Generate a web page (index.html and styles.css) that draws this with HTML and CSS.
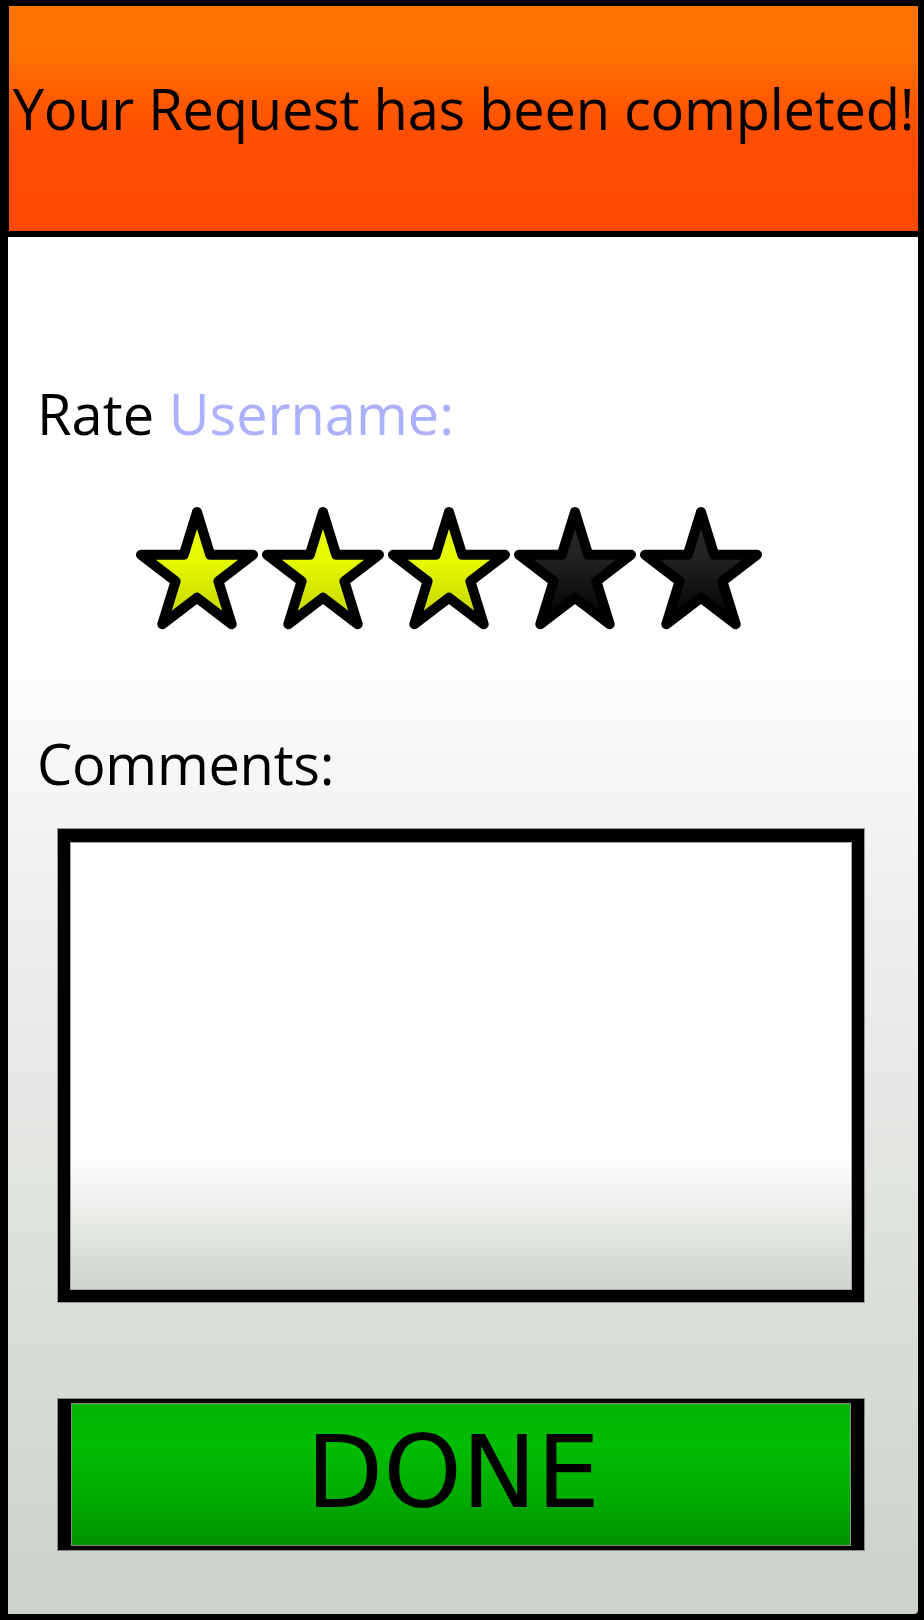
FILE: index.html
```html
<!DOCTYPE html>
<html lang="en">
<head>
<meta charset="utf-8">
<title>Request completed</title>
<link rel="stylesheet" href="styles.css">
</head>
<body>
<div class="frame">
  <header class="banner">
    <h1 class="banner-title">Your Request has been completed!</h1>
  </header>
  <main class="panel">
    <h2 class="label rate-label">Rate <span class="username">Username:</span></h2>
    <div class="stars">
      <svg class="star" viewBox="0 0 122 124" width="122" height="124"><defs><linearGradient id="gy" x1="0" y1="0" x2="0" y2="1"><stop offset="0" stop-color="#ecff00"/><stop offset="0.45" stop-color="#e4fa00"/><stop offset="1" stop-color="#c2d000"/></linearGradient></defs><polygon class="star-on" points="61,6 74.2,48.8 117,48.8 82.4,75.3 95.7,118.2 61,91.7 26.3,118.2 39.6,75.3 5,48.8 47.8,48.8"/></svg>
      <svg class="star" viewBox="0 0 122 124" width="122" height="124"><polygon class="star-on" points="61,6 74.2,48.8 117,48.8 82.4,75.3 95.7,118.2 61,91.7 26.3,118.2 39.6,75.3 5,48.8 47.8,48.8"/></svg>
      <svg class="star" viewBox="0 0 122 124" width="122" height="124"><polygon class="star-on" points="61,6 74.2,48.8 117,48.8 82.4,75.3 95.7,118.2 61,91.7 26.3,118.2 39.6,75.3 5,48.8 47.8,48.8"/></svg>
      <svg class="star" viewBox="0 0 122 124" width="122" height="124"><defs><linearGradient id="gd" x1="0" y1="0" x2="0" y2="1"><stop offset="0" stop-color="#2c2c2c"/><stop offset="0.4" stop-color="#222"/><stop offset="1" stop-color="#000"/></linearGradient></defs><polygon class="star-off" points="61,6 74.2,48.8 117,48.8 82.4,75.3 95.7,118.2 61,91.7 26.3,118.2 39.6,75.3 5,48.8 47.8,48.8"/></svg>
      <svg class="star" viewBox="0 0 122 124" width="122" height="124"><polygon class="star-off" points="61,6 74.2,48.8 117,48.8 82.4,75.3 95.7,118.2 61,91.7 26.3,118.2 39.6,75.3 5,48.8 47.8,48.8"/></svg>
    </div>
    <h2 class="label comments-label">Comments:</h2>
    <div class="comment-box"></div>
    <button class="done" type="button">DONE</button>
  </main>
</div>
</body>
</html>
```
FILE: styles.css
```css
html, body {
  margin: 0;
  padding: 0;
  background: #000;
}

.frame {
  box-sizing: border-box;
  width: 924px;
  height: 1620px;
  border-style: solid;
  border-color: #000;
  border-width: 6px 6px 6px 8px;
  display: flex;
  flex-direction: column;
  background: #000;
}

.banner {
  box-sizing: border-box;
  height: 231px;
  flex: none;
  margin-left: 1px;
  border-bottom: 6px solid #000;
  padding-top: 74px;
  background: linear-gradient(#ff7400 0%, #ff7200 22%, #ff5a00 42%, #ff4c00 60%, #ff4a00 100%);
}

.banner-title {
  margin: 0;
  font-family: "Open Sans", "Liberation Sans", sans-serif;
  font-weight: 400;
  font-size: 56px;
  line-height: 56px;
  letter-spacing: -0.25px;
  color: #000;
  text-align: center;
  white-space: nowrap;
}

.panel {
  flex: 1;
  display: flex;
  flex-direction: column;
  align-items: flex-start;
  border-bottom-right-radius: 4px;
  background: linear-gradient(#fff 0px, #fff 400px, #f4f5f4 560px, #e4e7e3 860px, #d7dbd5 1160px, #ccd1ca 100%);
}

.label {
  margin: 0;
  padding-left: 29px;
  font-family: "Open Sans", "Liberation Sans", sans-serif;
  font-weight: 400;
  font-size: 56px;
  line-height: 56px;
  color: #000;
}

.rate-label {
  margin-top: 148px;
}

.username {
  color: #abb0ff;
}

.stars {
  display: flex;
  gap: 4px;
  margin-top: 65px;
  margin-left: 128px;
}

.star {
  display: block;
}

.star-on,
.star-off {
  stroke: #000;
  stroke-width: 10;
  stroke-linejoin: round;
}

.star-on {
  fill: url(#gy);
}

.star-off {
  fill: url(#gd);
}

.comments-label {
  margin-top: 105px;
  letter-spacing: -0.3px;
}

.comment-box {
  box-sizing: border-box;
  width: 806px;
  height: 473px;
  margin-top: 38px;
  margin-left: 50px;
  border: solid #000;
  border-width: 13px 12px 12px 12px;
  box-shadow: 0 0 0 1px #9a9a9a, inset 0 0 0 1px #a8a8a8;
  background: linear-gradient(#fff 0%, #fff 68%, #f3f4f2 78%, #e1e5df 88%, #cdd4cc 100%);
}

.done {
  box-sizing: border-box;
  width: 806px;
  height: 151px;
  margin-top: 97px;
  margin-left: 50px;
  padding: 0 16px 4px 0;
  border: solid #000;
  border-width: 4px 13px;
  box-shadow: 0 0 0 1px #8a8a8a, inset 0 0 0 1px #8a8a8a;
  background: linear-gradient(#00b400 0%, #00bd00 30%, #00ac00 65%, #009400 100%);
  font-family: "DejaVu Sans", sans-serif;
  font-size: 100px;
  line-height: 100px;
  color: #000;
  display: flex;
  align-items: center;
  justify-content: center;
  cursor: pointer;
}
```
